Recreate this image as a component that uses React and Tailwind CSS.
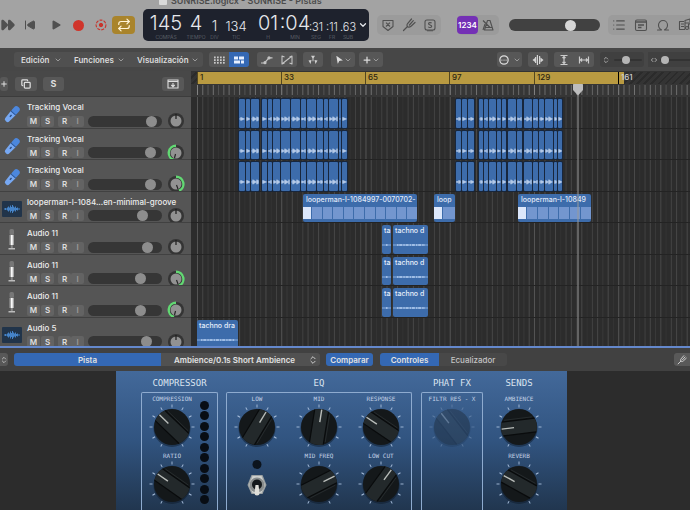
import React from "react";
import {
  FastForward, SkipBack, Play, Repeat, ChevronDown, ChevronsUpDown, ChevronsLeftRight,
  List, MousePointer2, Copy, Plus, CircleEllipsis,
} from "lucide-react";

/* ---------- small drawings ---------- */

function TuningFork({ className }) {
  return (
    <svg viewBox="0 0 14 14" className={className} fill="none" stroke="currentColor" strokeWidth="1.2" strokeLinecap="round">
      <path d="M1.5 12.5 5.5 8.5M9.5 1 5.6 5.5C4.5 7 5 8.5 6 9c1 .4 2 .2 3-.8L13 4.5M11.3 2.7 7.4 7" />
    </svg>
  );
}

function ReplaceIcon() {
  return (
    <svg viewBox="0 0 14 14" className="size-3.5" fill="none" stroke="currentColor" strokeWidth="1.1" strokeLinejoin="round">
      <path d="M2 2.5h10v6L7 12.5 2 8.5zM5 4.7l4 3.8M9 4.7 5 8.5" />
    </svg>
  );
}

function NotesIcon() {
  return (
    <svg viewBox="0 0 14 14" className="size-3.5" fill="none" stroke="currentColor" strokeWidth="1.1">
      <rect x="1.5" y="2" width="11" height="10.5" rx="1.5" />
      <path d="M1.5 4h11M4 7h6M4 9.500h3.500" strokeWidth="1.4" />
    </svg>
  );
}

function Metronome() {
  return (
    <svg viewBox="0 0 14 14" className="size-3.5" fill="none" stroke="currentColor" strokeWidth="1.1" strokeLinejoin="round">
      <path d="M6.500 2.5h2.500L12 12H3.500zM4 9.5h7.500M9 9.5 2 2.5M2 12l2-6" />
    </svg>
  );
}

function SoloBox() {
  return (
    <svg viewBox="0 0 14 14" className="size-3.5" fill="none" stroke="currentColor" strokeWidth="1.1">
      <rect x="2" y="2" width="10" height="10" rx="2" />
      <path d="M8.6 5.2C8 4.4 5.5 4.3 5.5 5.7S8.7 6.8 8.7 8.3 6 9.7 5.3 8.7M4 12.7h6" />
    </svg>
  );
}

function PunchIn() {
  return (
    <svg viewBox="0 0 12 12" className="size-3" fill="none" stroke="#c8342c">
      <circle cx="6" cy="6" r="4.9" strokeWidth="1.1" strokeDasharray="3 1.2" />
      <circle cx="6" cy="6" r="1.7" fill="#c8342c" />
    </svg>
  );
}

function LoopIcon() {
  return (
    <svg viewBox="0 0 14 14" className="size-3.5" fill="none" stroke="currentColor" strokeWidth="1.1" strokeLinecap="round">
      <path d="M1.5 12h4.3C3.7 11 2.5 9.3 2.5 7a4.5 4.5 0 0 1 9 0c0 2.300-1.200 4-3.300 5h4.300" />
    </svg>
  );
}

function MediaIcon() {
  return (
    <svg viewBox="0 0 16 14" className="h-3.5 w-4 shrink-0" fill="none" stroke="currentColor" strokeWidth="1.1" strokeLinejoin="round">
      <path d="M6 3.5H1.500v8H7M3 6h3M3 8.500h3M7 11V2.500l5-1.500v3M7 5h5" />
      <circle cx="9" cy="10" r="1.5" />
      <path d="M10.500 10V6h4.500v4" />
      <circle cx="13.5" cy="10.5" r="1.3" />
    </svg>
  );
}

function GridIcon() {
  return (
    <svg viewBox="0 0 12 8" className="h-2 w-3" fill="#c9c9c9">
      {[1, 4, 7, 10].flatMap((x) => [0.5, 3.2, 5.9].map((y) => <rect key={x + "-" + y} x={x} y={y} width="1.7" height="1.8" />))}
    </svg>
  );
}

function RegionsIcon() {
  return (
    <svg viewBox="0 0 12 8" className="h-2 w-3" fill="#e6efff">
      <path d="M1 .5h4v3H1zM6 .5h5v3H6zM1 4.500h6v3H1zM8 4.500h3v3H8z" />
    </svg>
  );
}

function AutomationIcon() {
  return (
    <svg viewBox="0 0 14 10" className="h-2.5 w-3.5" fill="none" stroke="#c4c4c4" strokeWidth="1.2">
      <path d="M1 8h3.500L9 2.800h3.500" />
      <circle cx="5" cy="7.7" r="1" fill="#c4c4c4" />
      <circle cx="9" cy="2.9" r="1" fill="#c4c4c4" />
    </svg>
  );
}

function FlexIcon() {
  return (
    <svg viewBox="0 0 14 10" className="h-2.5 w-3.5" fill="none" stroke="#c4c4c4" strokeWidth="1.1" strokeLinejoin="round">
      <path d="M4.500 2 2 1v8L12 1v8L9.500 8M2 9l2.500-1M12 1 9.500 2" />
    </svg>
  );
}

function CatchIcon() {
  return (
    <svg viewBox="0 0 12 10" className="h-2.5 w-3" fill="#d0d0d0">
      <path d="M4 .8h4L6.500 3.200v3h-1v-3zM1.500 5.500l3-.5-1 4zM10.500 5.500l-3-.5 1 4z" />
    </svg>
  );
}

function WaveZoomIcon() {
  return (
    <svg viewBox="0 0 14 10" className="h-2.5 w-3.5" fill="#d4d4d4">
      <path d="M1.500 5 4 3v4zM4 2h1.200v6H4zM5.800 0h1.200v10H5.800zM8 1h1.200v8H8zM9.500 2.500 12.500 5l-3 2.500z" />
    </svg>
  );
}

function FitIcon({ rotated }) {
  return (
    <svg viewBox="0 0 12 12" className={rotated ? "size-3 rotate-90" : "size-3"} fill="none" stroke="#cbcbcb" strokeWidth="1.2">
      <path d="M2.500 1.500h7M2.500 10.500h7M6 2.500v7M4.500 4 6 2.500 7.500 4M4.500 8 6 9.500 7.500 8" />
    </svg>
  );
}

function MicIcon() {
  return (
    <svg viewBox="0 0 20 20" className="size-5">
      <g transform="rotate(42 10 10)">
        <rect x="7" y="0.5" width="6.5" height="9" rx="3" fill="#4c87dd" />
        <path d="M7 8.500h6.500l-.6 9a2.600 2 0 0 1-5.200 0z" fill="#77a8f2" />
        <path d="M7 8.500h6.500" stroke="#2c5799" />
        <path d="M10.300 11v2.500" stroke="#294c84" strokeWidth="1.3" />
      </g>
    </svg>
  );
}

function StandMicIcon() {
  return (
    <svg viewBox="0 0 20 24" className="h-6 w-5">
      <rect x="7.5" y="1" width="4.5" height="6" rx="1.5" fill="#777" />
      <path d="M7.500 7H12v10H7.500z" fill="#a5a5a5" />
      <path d="M9 7h1.700v10H9z" fill="#fafafa" />
      <path d="M8.800 17h2v3h-2z" fill="#888" />
      <path d="M6.500 20h6.500v1.500H6.500z" fill="#bcbcbc" />
    </svg>
  );
}

function WaveTileIcon() {
  const heights = [1, 2, 1, 3, 5, 3, 7, 4, 8, 5, 3, 5, 2, 3, 1, 1];
  return (
    <svg viewBox="0 0 20 16" className="h-4 w-5">
      <rect width="20" height="16" rx="1" fill="#21344a" />
      {heights.map((h, i) => <rect key={i} x={2 + i} y={8 - h / 2} width="1" height={h} fill="#4583c8" />)}
    </svg>
  );
}

const trackIcons = { mic: MicIcon, stand: StandMicIcon, wave: WaveTileIcon };

function PanKnob({ side }) {
  return (
    <svg viewBox="0 0 18 18" className="size-[18px]" role="img" aria-label="Pan">
      <circle cx="9" cy="9" r="8" fill="#343434" />
      <circle cx="9" cy="9" r="5.5" fill="#929292" />
      {side === "left" && <path d="M7 16A7.300 7.300 0 0 1 9 1.700" fill="none" stroke="#62d873" strokeWidth="2.4" />}
      {side === "right" && <path d="M9 1.700A7.300 7.300 0 0 1 12 15.700" fill="none" stroke="#62d873" strokeWidth="2.4" />}
      {!side && <path d="M9 2v5" stroke="#1c1c1c" strokeWidth="1.2" />}
      {side === "left" && <path d="M8.500 10 7.500 14" stroke="#222" strokeWidth="1.2" />}
      {side === "right" && <path d="M9.500 10l1.500 4" stroke="#222" strokeWidth="1.2" />}
    </svg>
  );
}

/* ---------- top bar ---------- */

function LcdCell({ value, label, className }) {
  return (
    <div className={"flex h-full flex-col items-center " + className}>
      <div className="flex h-6 items-end leading-none">{value}</div>
      <div className="mt-px text-[5px] leading-[6px] text-[#6b7078]">{label}</div>
    </div>
  );
}

function Lcd() {
  return (
    <div className="flex h-8 w-[226px] shrink-0 rounded-[5px] bg-[#1e222d] pl-1 font-light text-[#e6e8ec]">
      <LcdCell className="w-[38px] text-[20px]" value="145" label="COMPÁS" />
      <LcdCell className="w-[22px] text-[20px]" value="4" label="TIEMPO" />
      <LcdCell className="w-[15px] text-[14px]" value="1" label="DIV" />
      <LcdCell className="w-7 text-[13px]" value="134" label="TIC" />
      <LcdCell className="ml-1 w-7 text-[20px]" value="01" label="H" />
      <LcdCell className="w-[26px] text-[20px]" value=":04" label="MIN" />
      <LcdCell className="w-4 text-[11px]" value=":31" label="SEG" />
      <LcdCell className="w-4 text-[11px]" value=":11" label="FR" />
      <LcdCell className="w-4 text-[11px]" value=".63" label="SUB" />
      <button aria-label="Modo de visualización" className="flex flex-1 items-center justify-center">
        <ChevronDown className="size-2.5" strokeWidth={3} />
      </button>
    </div>
  );
}

function TopBar() {
  return (
    <header className="h-12 shrink-0 overflow-hidden bg-[#a3a3a3] text-[#505050]">
      <div className="flex h-[9px] items-start">
        <h1 className="-mt-1 ml-[159px] flex items-center gap-1 text-[9px] leading-[10px] font-semibold whitespace-nowrap text-[#4c4c4c]">
          <span className="h-2 w-2 rounded-[1px] bg-[#dadada]" />
          SUNRISE.logicx - SUNRISE - Pistas
        </h1>
      </div>
      <div className="flex h-8 items-center">
        <div className="flex w-[143px] shrink-0 items-center">
          <button aria-label="Avanzar" className="w-4"><FastForward className="size-4" fill="currentColor" strokeWidth={0} /></button>
          <button aria-label="Ir al principio" className="ml-2 w-3.5"><SkipBack className="size-3" fill="currentColor" strokeWidth={2} /></button>
          <button aria-label="Reproducir" className="ml-3 w-3"><Play className="size-3" fill="currentColor" strokeWidth={0} /></button>
          <button aria-label="Grabar" className="ml-[11px] size-[11px] rounded-full bg-[#d0352b]" />
          <button aria-label="Pinchado" className="ml-[11px]"><PunchIn /></button>
          <button aria-label="Ciclo" className="ml-[5px] flex h-[18px] w-[23px] items-center justify-center rounded bg-[#a9842c] text-[#fff4d6]">
            <Repeat className="size-3.5" strokeWidth={2} />
          </button>
        </div>
        <Lcd />
        <div className="ml-2 flex h-5 w-16 shrink-0 items-center justify-around rounded-[5px] bg-[#9b9b9b]">
          <button aria-label="Reemplazar"><ReplaceIcon /></button>
          <button aria-label="Afinador"><TuningFork className="size-3.5" /></button>
          <button aria-label="Solo"><SoloBox /></button>
        </div>
        <div className="ml-4 flex h-5 w-[42px] shrink-0 items-center justify-between rounded-[5px] bg-[#9b9b9b] pr-1">
          <button aria-label="Cuenta atrás" className="flex h-[18px] w-[21px] items-center justify-center rounded bg-[#7430b5] text-[8px] font-semibold text-white">1234</button>
          <button aria-label="Metrónomo"><Metronome /></button>
        </div>
        <input
          type="range" min="0" max="100" defaultValue="70" aria-label="Volumen principal"
          className="ml-[10px] h-3 w-[91px] shrink-0 appearance-none rounded-full bg-[#414141] [&::-webkit-slider-thumb]:size-[11px] [&::-webkit-slider-thumb]:appearance-none [&::-webkit-slider-thumb]:rounded-full [&::-webkit-slider-thumb]:bg-[#d6d6d6]"
        />
        <div className="ml-auto flex h-5 w-[82px] shrink-0 items-center gap-2 overflow-hidden rounded-l-[5px] bg-[#9b9b9b] pl-1">
          <button aria-label="Editores de lista"><List className="size-3.5" strokeWidth={2} /></button>
          <button aria-label="Bloc de notas"><NotesIcon /></button>
          <button aria-label="Bucles"><LoopIcon /></button>
          <button aria-label="Medios" className="shrink-0"><MediaIcon /></button>
        </div>
      </div>
    </header>
  );
}

/* ---------- menus ---------- */

function MenuButton({ children, className }) {
  return (
    <button className={"flex items-center justify-between " + className}>
      {children}
      <ChevronDown className="size-2 text-[#9a9a9a]" strokeWidth={3} />
    </button>
  );
}

const toolGroup = "flex h-[15px] shrink-0 items-center justify-around rounded-[3px] bg-[#575757]";
const miniSlider = "h-[2px] appearance-none rounded-full bg-[#333] [&::-webkit-slider-thumb]:size-2 [&::-webkit-slider-thumb]:appearance-none [&::-webkit-slider-thumb]:rounded-full [&::-webkit-slider-thumb]:bg-[#b5b5b5]";

function MenuBar() {
  return (
    <nav className="flex h-[23px] shrink-0 items-center overflow-hidden bg-[#474747] text-[8px] font-semibold text-[#dcdcdc]">
      <div className="ml-[14px] flex h-[15px] w-[189px] shrink-0 items-center justify-between rounded-[3px] bg-[#505050] pr-1 pl-[7px]">
        <MenuButton className="w-[41px]">Edición</MenuButton>
        <MenuButton className="w-[51px]">Funciones</MenuButton>
        <MenuButton className="w-[62px]">Visualización</MenuButton>
      </div>
      <div className="ml-1.5 flex h-[15px] w-10 shrink-0 overflow-hidden rounded-[3px] bg-[#575757]">
        <button aria-label="Cuadrícula" className="flex w-5 items-center justify-center"><GridIcon /></button>
        <button aria-label="Pasajes" className="flex w-5 items-center justify-center bg-[#3468b4]"><RegionsIcon /></button>
      </div>
      <div className={toolGroup + " ml-2 w-10"}>
        <button aria-label="Automatización"><AutomationIcon /></button>
        <button aria-label="Flex"><FlexIcon /></button>
      </div>
      <div className={toolGroup + " ml-1.5 w-5"}><button aria-label="Seguir"><CatchIcon /></button></div>
      <div className={toolGroup + " ml-2 w-6"}>
        <button aria-label="Puntero" className="flex items-center"><MousePointer2 className="size-2.5 rotate-12" fill="currentColor" strokeWidth={0} /><ChevronDown className="size-2 text-[#9a9a9a]" strokeWidth={3} /></button>
      </div>
      <div className={toolGroup + " ml-1 w-6"}>
        <button aria-label="Marquesina" className="flex items-center"><Plus className="size-2.5" strokeWidth={3} /><ChevronDown className="size-2 text-[#9a9a9a]" strokeWidth={3} /></button>
      </div>
      <div className={toolGroup + " ml-auto w-[25px]"}>
        <button aria-label="Ajuste" className="flex items-center gap-1"><CircleEllipsis className="size-2.5" strokeWidth={3} /><ChevronDown className="size-2 text-[#9a9a9a]" strokeWidth={3} /></button>
      </div>
      <div className={toolGroup + " ml-1.5 w-5"}><button aria-label="Zoom de onda"><WaveZoomIcon /></button></div>
      <div className={toolGroup + " ml-1.5 w-10"}>
        <button aria-label="Ajustar vertical"><FitIcon /></button>
        <button aria-label="Ajustar horizontal"><FitIcon rotated /></button>
      </div>
      <div className="ml-1.5 flex h-[15px] w-[44px] shrink-0 items-center gap-1 rounded-[3px] bg-[#404040] pl-0.5">
        <ChevronsUpDown className="size-2 shrink-0 text-[#a5a5a5]" strokeWidth={3} />
        <input type="range" defaultValue="40" aria-label="Zoom vertical" className={miniSlider + " w-7"} />
      </div>
      <div className="ml-1 flex h-[15px] w-[42px] shrink-0 items-center gap-0.5 overflow-hidden bg-[#404040] pl-0.5">
        <ChevronsLeftRight className="size-2 shrink-0 text-[#a5a5a5]" strokeWidth={3} />
        <input type="range" defaultValue="3" aria-label="Zoom horizontal" className={miniSlider + " w-9 shrink-0"} />
      </div>
    </nav>
  );
}

/* ---------- tracks ---------- */

const tracks = [
  { name: "Tracking Vocal", icon: "mic", level: 92 },
  { name: "Tracking Vocal", icon: "mic", level: 90, pan: "left" },
  { name: "Tracking Vocal", icon: "mic", level: 91, pan: "right" },
  { name: "looperman-l-1084...en-minimal-groove", icon: "wave", level: 77 },
  { name: "Audio 11", icon: "stand", level: 85 },
  { name: "Audio 11", icon: "stand", level: 75, pan: "right" },
  { name: "Audio 11", icon: "stand", level: 75, pan: "left" },
  { name: "Audio 5", icon: "wave", level: 84 },
];

function TrackHeader({ track }) {
  const Icon = trackIcons[track.icon];
  const key = "flex h-[11px] w-[13px] items-center justify-center rounded-[2px] bg-[#636363] text-[8px] font-semibold";
  return (
    <li className="flex items-start overflow-hidden border-b border-[#414141] bg-[#555]">
      <div className="flex h-7 w-[27px] shrink-0 items-center pt-1.5 pl-0.5"><Icon /></div>
      <div className="min-w-0 flex-1 pt-[5px]">
        <h2 className="text-[8px] leading-[11px] font-medium whitespace-nowrap text-[#ececec]">{track.name}</h2>
        <div className="flex h-4 items-center text-[#dedede]">
          <button className={key}>M</button>
          <button className={key + " ml-px"}>S</button>
          <button className={key + " ml-1"}>R</button>
          <button className={key + " text-[#999]"}>I</button>
          <input
            type="range" min="0" max="100" defaultValue={track.level} aria-label={"Volumen " + track.name}
            className="ml-1 h-[11px] w-[74px] shrink-0 appearance-none rounded-full bg-[#363636] [&::-webkit-slider-thumb]:size-[11px] [&::-webkit-slider-thumb]:appearance-none [&::-webkit-slider-thumb]:rounded-full [&::-webkit-slider-thumb]:bg-[#8d8d8d]"
          />
          <span className="ml-[5px] shrink-0"><PanKnob side={track.pan} /></span>
        </div>
      </div>
    </li>
  );
}

function TrackList() {
  const button = "flex h-[14px] items-center justify-center rounded-[3px] bg-[#585858] text-[#dedede]";
  return (
    <aside className="flex w-[191px] shrink-0 flex-col overflow-hidden bg-[#555]">
      <div className="flex h-[26px] shrink-0 items-center border-b border-[#3c3c3c] bg-[#484848] pr-[7px]">
        <button aria-label="Añadir pista" className={button + " w-2"}><Plus className="size-2" strokeWidth={3} /></button>
        <button aria-label="Duplicar pista" className={button + " ml-[7px] w-[22px]"}><Copy className="size-2.5" strokeWidth={3} /></button>
        <button aria-label="Solo" className={button + " ml-1.5 w-[21px] text-[9px] font-bold"}>S</button>
        <button aria-label="Configuración de cabecera" className={button + " ml-auto w-[22px]"}>
          <svg viewBox="0 0 12 10" className="h-2.5 w-3" fill="none" stroke="currentColor" strokeWidth="1.1">
            <path d="M1 1h10v8H1zM1 2.500h10M6 4v3.500M4.300 6 6 7.700 7.700 6" />
          </svg>
        </button>
      </div>
      <ul className="grid h-[252px] shrink-0 grid-rows-8">
        {tracks.map((t, i) => <TrackHeader key={i} track={t} />)}
      </ul>
    </aside>
  );
}

/* Clip positions are in pixels from the left edge of the arrangement canvas. */
const vocalTakes = [
  [48, 6], [55, 4], [60, 8], [71, 5], [77, 4], [82, 7], [90, 9], [100, 9], [110, 5], [116, 9], [126, 6], [133, 4], [138, 9], [148, 2], [151, 5],
  [265, 5], [271, 5], [277, 6], [288, 4], [293, 4], [298, 7], [306, 4], [311, 4], [317, 8], [326, 5], [333, 8], [342, 5], [348, 5], [354, 8], [363, 3], [367, 4],
];
const tachno = [[191, 9, "ta"], [202, 35, "tachno d"]];
const lanes = [
  { kind: "take" }, { kind: "take" }, { kind: "take" },
  { kind: "loop", clips: [[112, 114, "looperman-l-1084997-0070702-"], [243, 21, "loop"], [327, 73, "looperman-l-10849"]] },
  { kind: "audio", clips: tachno }, { kind: "audio", clips: tachno }, { kind: "audio", clips: tachno },
  { kind: "audio", clips: [[6, 41, "tachno dra"]] },
];

function Take({ x, w }) {
  return (
    <div className="absolute top-0.5 bottom-0 rounded-[1px] bg-[#3d6cab] ring-1 ring-[#17263d]" style={{ left: x, width: w }}>
      <svg viewBox={"0 0 " + w + " 30"} className="block h-full w-full" preserveAspectRatio="none">
        {Array.from({ length: w - 1 }, (_, i) => {
          const h = 1 + ((i * 3 + x) % 4) * (w > 6 ? 1.3 : 0.9);
          return <rect key={i} x={i + 0.5} y={21 - h / 2} width="1" height={h} fill="#dbe8fc" />;
        })}
      </svg>
    </div>
  );
}

function LoopClip({ x, w, name }) {
  const segments = Math.max(1, Math.round((w - 9) / 10.6));
  return (
    <div className="absolute top-0.5 bottom-0 flex flex-col overflow-hidden rounded-[2px] bg-[#3d6cab]" style={{ left: x, width: w }}>
      <div className="h-[13px] pl-[3px] text-[7px] leading-3 font-medium whitespace-nowrap text-[#e0e9f8]">{name}</div>
      <div className="flex h-3 gap-px">
        <span className="w-2 bg-[#dce7fb]" />
        {Array.from({ length: segments }, (_, i) => <span key={i} className="flex-1 bg-[#7396cf]" />)}
      </div>
    </div>
  );
}

function AudioClip({ x, w, name }) {
  return (
    <div className="absolute top-0.5 bottom-0 overflow-hidden rounded-[2px] bg-[#3d6cab]" style={{ left: x, width: w }}>
      <div className="h-[18px] pl-[2px] text-[7px] leading-3 font-medium whitespace-nowrap text-[#e6eefb]">{name}</div>
      <svg viewBox={"0 0 " + w + " 4"} className="block h-1 w-full">
        <path d={"M0 2H" + w} stroke="#9fc0ee" strokeWidth="0.8" />
        <path d={"M4 2H" + (w - 3)} stroke="#b3cbee" strokeWidth="1.4" strokeDasharray="1.5 .8 3 1" />
      </svg>
    </div>
  );
}

const gridLines = Array.from({ length: 190 }, (_, i) => ({ x: 6 + i * 5.265, strength: i % 16 === 0 ? 0.3 : [0.16, 0.2, 0.1, 0.22, 0.06][i % 5] }));
const rulerMarks = [[6, "1"], [90, "33"], [174, "65"], [258, "97"], [343, "129"], [427, "161"]];

function Arrangement() {
  return (
    <section className="relative min-w-0 flex-1 overflow-hidden bg-[#2c2c2c]" aria-label="Pistas">
      <div className="relative h-[13px] overflow-hidden border-t border-[#333] bg-[repeating-linear-gradient(135deg,#343434_0px,#343434_3px,#2b2b2b_3px,#2b2b2b_5px)] pl-1.5">
        <div className="h-3 w-[427px] bg-[#b99a41]" />
        {rulerMarks.map(([x, label], i) => (
          <span key={label} className={"absolute top-0 h-3 border-l pl-0.5 text-[8px] leading-[11px] font-medium " + (i === 5 ? "border-black text-[#d0d0d0]" : "border-[#54471f] text-[#2c2510]")} style={{ left: x }}>{label}</span>
        ))}
      </div>
      <svg className="block h-[13px] w-full bg-[#363636]">
        {gridLines.map((l) => <rect key={l.x} x={l.x} y="1" width="1" height="10" fill="#fff" opacity={l.strength + 0.08} />)}
      </svg>
      <div className="relative h-[252px]">
        <svg className="absolute inset-0 h-full w-full">
          {gridLines.map((l) => <rect key={l.x} x={l.x} y="0" width="1" height="252" fill="#fff" opacity={l.strength * 0.65} />)}
        </svg>
        <div className="relative grid h-full grid-rows-8">
          {lanes.map((lane, i) => (
            <div key={i} className="relative border-b border-[#232323]">
              {lane.kind === "take" && vocalTakes.map(([x, w]) => <Take key={x} x={x} w={w} />)}
              {lane.kind === "loop" && lane.clips.map(([x, w, name]) => <LoopClip key={x} x={x} w={w} name={name} />)}
              {lane.kind === "audio" && lane.clips.map(([x, w, name]) => <AudioClip key={x} x={x} w={w} name={name} />)}
            </div>
          ))}
        </div>
      </div>
      <svg viewBox="0 0 12 264" className="absolute top-3 left-[381px] h-[264px] w-3" aria-hidden="true">
        <rect x="5.5" y="8" width="1" height="256" fill="#999" />
        <path d="M1.500 1h9q.5 0 .5.500V7L6 12.500 1 7V1.500Q1 1 1.500 1z" fill="#bdbdbd" />
      </svg>
    </section>
  );
}

/* ---------- smart controls ---------- */

function Knob({ label, angle, dim }) {
  return (
    <div className="flex w-[60px] flex-col items-center">
      <div className="h-2 text-[6px] leading-2 whitespace-nowrap text-[#c3d2e6]">{label}</div>
      <svg viewBox="-24 -24 48 48" className="size-12" role="img" aria-label={label} opacity={dim ? 0.32 : 1}>
        {Array.from({ length: 11 }, (_, i) => (
          <path key={i} d="M0 -19.500V-22.500" stroke="#a9bfdc" strokeWidth="0.9" transform={"rotate(" + (i * 30 - 150) + ")"} />
        ))}
        <circle cy="1.5" r="18.5" fill="#0c1724" opacity="0.45" />
        <circle r="18" fill="#14181a" />
        <g transform={"rotate(" + angle + ")"}>
          <path d="M-7 -16.500Q0 -19.500 7 -16.500V16.500Q0 19.500 -7 16.500z" fill="#23292b" />
          <path d="M-7 -16.500V16.500M7 -16.500V16.500" stroke="#090b0c" strokeWidth="1.2" />
          <path d="M8.500 -14V14" stroke="#2c3133" strokeWidth="0.7" />
          <path d="M0 -17.500V-5" stroke="#b9bdba" strokeWidth="1.4" />
        </g>
      </svg>
    </div>
  );
}

function ToggleSwitch() {
  return (
    <div className="flex w-[60px] flex-col items-center pt-2">
      <svg viewBox="0 0 24 48" className="h-12 w-6" role="img" aria-label="Interruptor">
        <circle cx="12" cy="4.5" r="4.5" fill="#0c141d" />
        <path d="M6.500 15h11l4 10-4 9h-11l-4-9z" fill="#9da2a3" />
        <path d="M7.500 16h9l3.500 9-3.500 8h-9L4 25z" fill="#cfd1ce" />
        <circle cx="12" cy="25" r="7.5" fill="#878b8b" />
        <circle cx="12" cy="24.5" r="5" fill="#15191b" />
        <path d="M10.500 25h3l1 8a2.500 2.500 0 0 1-5 0z" fill="#e0dfd9" />
      </svg>
    </div>
  );
}

function Section({ title, boxed, className, children }) {
  return (
    <section className={"flex flex-col " + className}>
      <h3 className="h-[21px] text-center text-[9px] leading-6 whitespace-nowrap text-[#dbe4f0]">{title}</h3>
      <div className={"flex flex-1 gap-0.5 rounded-t-[2px] border border-b-0 pt-0.5 " + (boxed ? "border-[#8eabcf]" : "border-transparent")}>{children}</div>
    </section>
  );
}

const knobColumn = "flex flex-col items-center gap-px";

function Plugin() {
  return (
    <div className="flex h-[139px] justify-center overflow-hidden bg-[#2c2c2c] pr-[7px]">
      <div className="flex w-[451px] shrink-0 bg-linear-to-b from-[#43699a] via-[#315480] to-[#21364f] pl-[25px] font-['DejaVu_Sans_Mono',monospace]">
        <Section title="COMPRESSOR" boxed className="w-[77px]">
          <div className={knobColumn}>
            <Knob label="COMPRESSION" angle={-46} />
            <Knob label="RATIO" angle={-55} />
          </div>
          <div className="-ml-1 flex h-[109px] flex-col justify-between pt-1.5">
            {Array.from({ length: 10 }, (_, i) => <span key={i} className="size-[9px] rounded-full bg-[#080d14]" />)}
          </div>
        </Section>
        <Section title="EQ" boxed className="ml-2 w-[186px]">
          <div className={knobColumn}><Knob label="LOW" angle={31} /><ToggleSwitch /></div>
          <div className={knobColumn}><Knob label="MID" angle={9} /><Knob label="MID FREQ" angle={63} /></div>
          <div className={knobColumn}><Knob label="RESPONSE" angle={-56} /><Knob label="LOW CUT" angle={36} /></div>
        </Section>
        <Section title="PHAT FX" boxed className="ml-[9px] w-[62px]">
          <div className={knobColumn}><Knob label="FILTR RES - X" angle={-38} dim /></div>
        </Section>
        <Section title="SENDS" className="ml-[5px] w-[62px]">
          <div className={knobColumn}><Knob label="AMBIENCE" angle={-97} /><Knob label="REVERB" angle={-61} /></div>
        </Section>
      </div>
    </div>
  );
}

function SmartControls() {
  return (
    <footer className="shrink-0 border-t-2 border-[#6488cc]">
      <div className="flex h-[23px] items-center overflow-hidden bg-[#414141] text-[8px] font-semibold text-[#e2e2e2]">
        <button aria-label="Inspector" className="flex h-[13px] w-2 items-center justify-center rounded-r-[3px] bg-[#585858]"><ChevronsUpDown className="size-2" /></button>
        <button className="ml-1.5 h-[13px] w-[147px] rounded-l-[3px] bg-[#3468b4]">Pista</button>
        <div className="relative h-[13px] w-[159px] shrink-0">
          <select aria-label="Preajuste" className="block h-[13px] w-full appearance-none rounded-r-[3px] bg-[#515151] pr-3 [text-align-last:center]">
            <option>Ambience/0.1s Short Ambience</option>
          </select>
          <ChevronsUpDown className="pointer-events-none absolute top-0.5 right-0.5 size-2.5" strokeWidth={2} />
        </div>
        <button className="ml-1.5 h-[13px] w-[47px] rounded-[3px] bg-[#3468b4]">Comparar</button>
        <button className="ml-[7px] h-[13px] w-[59px] rounded-l-[3px] bg-[#3468b4]">Controles</button>
        <button className="h-[13px] w-[68px] rounded-r-[3px] bg-[#484848] font-medium text-[#c4c4c4]">Ecualizador</button>
        <button aria-label="Herramientas" className="ml-auto flex h-[13px] w-4 items-center justify-center rounded-l-[3px] bg-[#595959]"><TuningFork className="size-2.5" /></button>
      </div>
      <Plugin />
    </footer>
  );
}

export default function App() {
  return (
    <div className="flex h-screen w-full flex-col overflow-hidden bg-[#2c2c2c] font-[Inter,sans-serif]">
      <TopBar />
      <MenuBar />
      <main className="flex min-h-0 flex-1 overflow-hidden">
        <TrackList />
        <Arrangement />
      </main>
      <SmartControls />
    </div>
  );
}
